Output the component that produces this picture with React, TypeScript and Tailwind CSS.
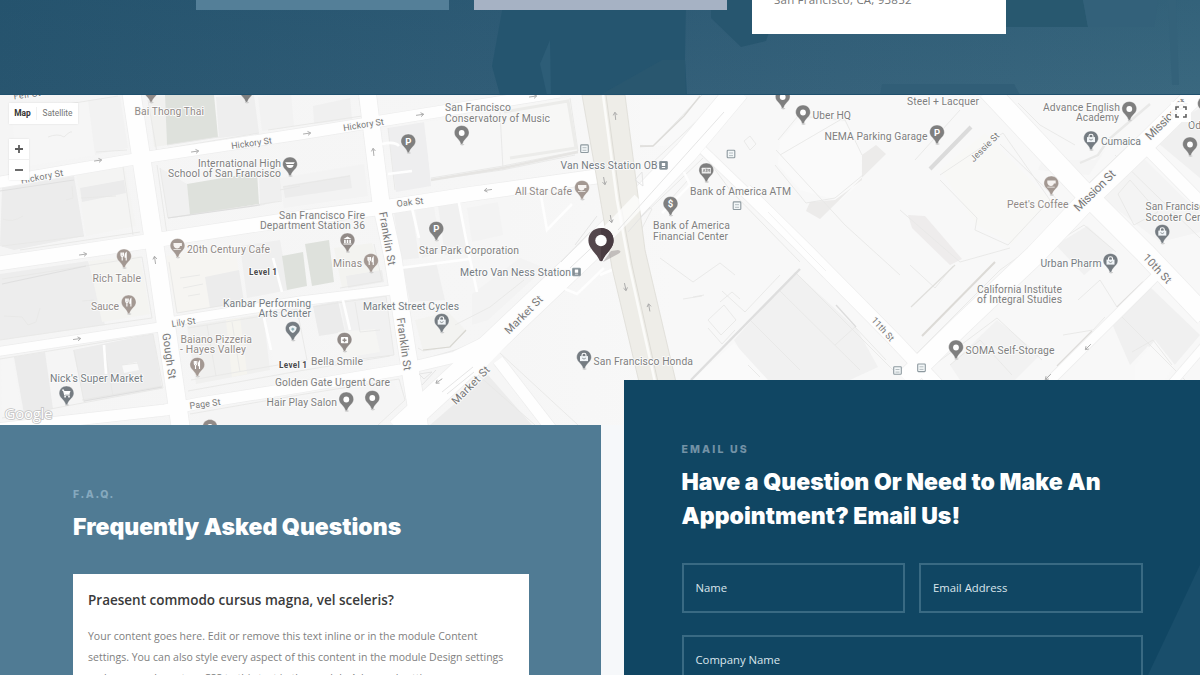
import React from "react";

type Glyph = "dot" | "P" | "$" | "cup" | "fork" | "bag" | "cart" | "plus" | "building" | "grad" | "atm" | "mask";

const GREY = "#7f7f7f";
const WARM = "#918a87";
const SLATE = "#757c82";

/* text, left x, width, vertical centre, colour */
const labels: [string, number, number, number, string][] = [
  ["Bai Thong Thai", 134.5, 69.5, 111.5, WARM],
  ["San Francisco", 445, 66, 107.5, GREY],
  ["Conservatory of Music", 445, 105, 118, GREY],
  ["International High", 198, 83, 163, GREY],
  ["School of San Francisco", 168, 113, 173.5, GREY],
  ["San Francisco Fire", 279, 86, 215, GREY],
  ["Department Station 36", 260, 105, 225.5, GREY],
  ["20th Century Cafe", 187, 83, 249.5, WARM],
  ["Rich Table", 92.5, 48.5, 278, WARM],
  ["Sauce", 91, 28, 306.5, WARM],
  ["Minas", 333, 29, 263.5, WARM],
  ["Star Park Corporation", 419, 100, 250.5, GREY],
  ["All Star Cafe", 515, 57, 191.5, WARM],
  ["Metro Van Ness Station", 460, 111, 272, SLATE],
  ["Van Ness Station OB", 560.5, 97, 165.5, SLATE],
  ["Bank of America ATM", 690, 101, 191.5, GREY],
  ["Bank of America", 653, 77, 225.5, GREY],
  ["Financial Center", 653, 75, 236, GREY],
  ["Uber HQ", 812.5, 38.5, 115, GREY],
  ["NEMA Parking Garage", 824.5, 103, 136.2, GREY],
  ["Steel + Lacquer", 907, 72, 101, GREY],
  ["Advance English", 1043, 77, 107, GREY],
  ["Academy", 1076, 43, 117.5, GREY],
  ["Cumaica", 1101, 40, 141.5, SLATE],
  ["Peet's Coffee", 1007, 61.5, 204.5, WARM],
  ["San Francisco", 1145.5, 65, 206.5, GREY],
  ["Scooter Center", 1145.5, 70, 217, GREY],
  ["Od", 1188, 13, 125.7, GREY],
  ["Urban Pharm", 1040.5, 61, 263.5, SLATE],
  ["California Institute", 977, 85, 289, GREY],
  ["of Integral Studies", 977, 85, 299.5, GREY],
  ["SOMA Self-Storage", 965.5, 89, 350.5, GREY],
  ["San Francisco Honda", 593.5, 99.5, 361, GREY],
  ["Market Street Cycles", 363, 96, 306.5, SLATE],
  ["Kanbar Performing", 223, 88, 303, SLATE],
  ["Arts Center", 258.5, 52.5, 313.7, SLATE],
  ["Baiano Pizzeria", 180.5, 71.5, 339, WARM],
  ["- Hayes Valley", 180, 66, 349.5, WARM],
  ["Bella Smile", 311, 52, 361, GREY],
  ["Golden Gate Urgent Care", 275, 115, 382.5, GREY],
  ["Hair Play Salon", 266.5, 70.5, 402, GREY],
  ["Nick's Super Market", 50, 93, 378, SLATE],
];

/* text, centre x, centre y, rotation, width, font size */
const streets: [string, number, number, number, number, number][] = [
  ["Fell St", 27, 94.5, -8, 27, 9],
  ["Hickory St", 42, 176.5, -11, 43, 9],
  ["Hickory St", 251.5, 143, -8, 41, 9],
  ["Hickory St", 363.5, 124.5, -9, 41, 9],
  ["Oak St", 410, 202, -7, 27, 9],
  ["Lily St", 183.5, 322, -8, 24, 9],
  ["Page St", 205, 403.7, -8, 31, 9],
  ["Gough St", 169.5, 356, 82, 46, 11],
  ["Franklin St", 387.5, 238.5, 80, 54, 11],
  ["Franklin St", 404.3, 344, 82, 53, 11],
  ["Market St", 523.5, 314.5, -45, 49, 11],
  ["Market St", 470.5, 385, -45, 49, 11],
  ["Mission St", 1094.5, 190.5, -45, 53, 12],
  ["Mission St", 1166, 119, -45, 53, 12],
  ["Jessie St", 984.5, 147, -45, 37, 9],
  ["11th St", 883, 329, 48, 29, 9],
  ["10th St", 1157.5, 268.5, 47, 36, 11],
];

const pins: [number, number, Glyph, string][] = [
  [151, 91, "dot", WARM],
  [246.5, 91, "dot", GREY],
  [290, 164.5, "grad", GREY],
  [408.3, 141.5, "P", GREY],
  [461.7, 133, "dot", GREY],
  [582, 188, "cup", "#a39892"],
  [436.3, 229, "P", GREY],
  [347.5, 240.5, "building", WARM],
  [371, 261, "fork", "#a39892"],
  [177.5, 246, "cup", "#a39892"],
  [124, 256.5, "fork", "#a39892"],
  [128.7, 302.5, "fork", "#a39892"],
  [66.5, 393.5, "cart", SLATE],
  [197.3, 365, "fork", "#a39892"],
  [292.8, 329, "mask", SLATE],
  [344.5, 340, "plus", WARM],
  [346.3, 399.5, "dot", GREY],
  [372.3, 398, "dot", GREY],
  [210, 427, "dot", WARM],
  [441.7, 321, "bag", SLATE],
  [584, 357.5, "bag", SLATE],
  [670.5, 204, "$", GREY],
  [706.3, 170.5, "atm", GREY],
  [782.7, 97, "dot", GREY],
  [803, 112.5, "dot", GREY],
  [937, 132.5, "P", GREY],
  [1129.3, 109, "dot", GREY],
  [1091, 138.5, "bag", SLATE],
  [1051.3, 183.5, "cup", "#a39892"],
  [1190, 144.5, "dot", GREY],
  [1205, 104, "dot", GREY],
  [1162.3, 232, "bag", SLATE],
  [1110.5, 261, "bag", SLATE],
  [956, 347.5, "dot", GREY],
];

/* centre x, centre y, rotation of a right-pointing arrow */
const arrows: [number, number, number][] = [
  [98, 160.5, -8], [195, 151.5, -8], [307, 133.5, -8], [420, 114.8, -8], [533, 96.5, -8],
  [83, 254.5, -8], [77, 339, -8], [488, 190, 172], [373.5, 152, -96], [155, 260, -98],
  [615.3, 116, -96], [604.3, 181, 80], [611, 219, 80], [625.3, 287, 78], [649.2, 307.5, -100],
  [439, 381, 145], [1088, 347, 135], [1048, 377, 135],
];

const roads: [string, number][] = [
  ["M131 90L157 262L181 430", 18],
  ["M367 90L381 203L393 258L407 350L420 430", 17],
  ["M-5 183L135 159L300 134L430 113L560 92", 11],
  ["M-5 264L150 241L300 218L380 208L470 194L600 176", 14],
  ["M-5 352L160 327L175 321L300 301L392 290", 9],
  ["M-5 429L165 410L200 403L300 387L400 370L455 357L500 335", 11],
  ["M398 430L492 343L590 250L640 200L686 152L738 90", 23],
  ["M703 150L760 205", 8],
  ["M745 190L808 252L893 338L940 388", 13],
  ["M988 90L1080 188L1145 253L1205 316", 20],
  ["M905 380L960 326L1035 255L1090 197L1140 149L1200 90", 20],
  ["M1146 147L1205 207", 12],
  ["M1155 277L1043 388", 9],
  ["M498 360L552 430", 11],
  ["M1205 345L1168 388", 8],
];

const lanes = [
  "M273 258L282 292", "M341 292L350 330", "M411 204L419 238", "M458 198L470 260",
  "M541 196L547 230L572 204", "M382 144Q395 141 399 146", "M388 174L412 171", "M400 268L470 259L477 292",
  "M565 289L577 294L604 268", "M475 376L520 330", "M684 172L690 185L662 213", "M600 245L640 206",
  "M640 258L600 275", "M264 318L271 350", "M104 345L106 374",
];

/* points, fill */
const blocks: [string, string][] = [
  ["12,112 118,95 127,150 16,168", "#f6f6f6"],
  ["88,100 120,96 128,148 95,155", "#f2f2f2"],
  ["2,188 74,176 84,236 14,250 0,246", "#ececec"],
  ["76,172 124,163 136,226 86,236", "#f4f4f3"],
  ["80,188 124,180 126,193 82,202", "#ebebeb"],
  ["149,97 165,96 167,145 154,147", "#f1f1ef"],
  ["216,97 254,95 259,133 219,138", "#eeeeee"],
  ["258,97 291,93 294,126 262,131", "#f2f2f2"],
  ["160,168 187,184 190,216 168,218", "#f0f0f0"],
  ["259,172 280,169 282,200 260,206", "#efefef"],
  ["280,178 364,164 368,196 284,208", "#f3f3f3"],
  ["283,186 350,175 352,188 285,198", "#ececec"],
  ["313,106 350,98 352,119 314,124", "#f0f0f0"],
  ["388,128 425,122 431,186 396,192", "#eeeeef"],
  ["424,122 499,112 503,170 431,180", "#f7f7f7"],
  ["500,108 571,98 579,152 504,165", "#f7f7f6"],
  ["394,213 412,210 419,258 401,260", "#f0f0f0"],
  ["415,208 434,206 441,253 422,258", "#f2f2f2"],
  ["438,205 460,202 467,251 445,255", "#f0f0f0"],
  ["467,208 498,202 503,235 472,242", "#f3f3f3"],
  ["166,256 235,245 243,302 176,313", "#f6f5f2"],
  ["205,277 239,270 244,302 210,308", "#ececec"],
  ["240,246 280,240 289,290 247,298", "#efefef"],
  ["334,248 372,243 382,281 342,288", "#f3f3f0"],
  ["346,276 382,270 384,282 348,288", "#ededed"],
  ["0,274 88,261 105,325 0,340", "#ededed"],
  ["89,261 140,256 150,314 102,322", "#f4f4f1"],
  ["1,359 13,357 22,414 2,417", "#f6f6f6"],
  ["14,357 45,352 53,409 24,414", "#ebebeb"],
  ["73,350 153,334 162,388 84,402", "#ececec"],
  ["48,354 72,350 83,403 55,408", "#f5f5f5"],
  ["122,365 137,362 139,370 124,373", "#f9f9f9"],
  ["187,326 263,314 270,370 196,384", "#f0f0ef"],
  ["226,320 240,318 247,374 232,377", "#f5f4ef"],
  ["266,320 300,313 307,360 274,368", "#f6f6f6"],
  ["313,306 338,301 345,332 319,336", "#ebebeb"],
  ["340,302 386,295 394,355 351,361", "#f1f1f1"],
  ["338,332 375,329 380,352 343,358", "#f5f5f3"],
  ["403,268 436,262 445,300 410,302", "#efefef"],
  ["415,320 448,312 465,330 449,347 423,351", "#f3f3f1"],
  ["472,294 520,258 545,268 488,320 472,325", "#f3f3f3"],
  ["300,398 392,381 404,399 378,424 200,424 198,412", "#f5f5f5"],
  ["430,425 488,375 532,425", "#ececec"],
  ["640,100 720,95 670,145 650,147 640,143", "#f9f9f9"],
  ["780,140 800,118 845,122 862,152 861,182 840,201 800,190 778,165", "#fafafa"],
  ["862,155 876,145 886,154 820,219 806,211 810,202 835,200 862,180", "#ecebea"],
  ["908,215 925,216 962,259 950,265 912,228", "#eeecec"],
  ["940,170 985,133 1050,200 1012,244 977,225", "#f8f8f6"],
  ["795,272 857,329 878,367 850,380 758,380 734,340", "#f1f1f1"],
  ["734,343 768,380 692,380", "#fafafa"],
  ["1056,245 1087,226 1114,250 1084,275", "#f1f1f1"],
  ["1160,132 1200,108 1200,178 1157,142", "#f0f0f0"],
  ["1102,198 1140,155 1200,214 1200,232 1160,242", "#f4f4f4"],
  ["1110,319 1150,287 1200,335 1172,368 1148,346 1130,365", "#f0f0f0"],
  ["1135,365 1155,340 1175,365 1165,380 1135,380", "#f9f9f9"],
  ["950,365 997,320 1040,355 1015,380 960,380", "#f2f2f2"],
  ["1038,170 1050,142 1065,160 1095,160 1105,150 1089,175", "#f5f5f5"],
];

const outlines = [
  "M12 113L118 96M96 152L127 150M20 250L140 232M2 246L84 236",
  "M48 137Q58 133 64 137Q70 131 72 132M3 219Q12 223 23 216M66 200L73 198L72 186M81 198L116 196",
  "M146 152L259 133M167 145L219 137M168 218L282 201M160 168L168 218M157 165L167 234L300 211",
  "M148 100L157 153L290 132M133 235L122 160L4 183M268 130L362 116L359 98M280 190L300 186",
  "M283 187L350 176M372 195L366 122L284 137M395 190L388 128M431 180L502 170M502 170L575 155M500 112L503 170",
  "M431 178L503 166L578 151L570 98M388 212L595 179M397 258L388 215",
  "M0 340L102 325L152 318L142 257L2 279M4 316L22 317L28 325L36 322L40 308M82 301L94 300",
  "M0 359L153 334L163 388L2 418M74 350L84 402M104 345L113 396M82 400L162 386M122 365L138 363",
  "M188 328L263 316L297 309L307 360L191 380M207 325L216 376M232 322L240 372M169 262L177 313L243 302",
  "M180 278L200 275M183 288L203 284M188 296L200 294M340 288L382 281L374 244",
  "M313 307L344 302L386 296L394 355L319 364M355 302L360 332L380 330M418 348L423 351L449 347L466 331",
  "M188 391L299 371L390 356M190 414L299 395L399 379L405 400L378 425",
  "M414 362L455 350L497 335M425 405L488 350L510 332L502 350M426 418L442 399M441 392L470 368",
  "M502 350L620 235M500 353L578 425M478 375L535 425M524 280L490 307L455 325",
  "M640 147L653 146L702 95M650 165L698 120M703 158L617 240M715 168L686 140",
  "M708 154L800 244L890 330M708 160L730 190L800 262M776 150L845 225L900 275",
  "M778 140L798 116L845 120L862 155M775 165L806 203L835 198L863 175M780 155L840 120",
  "M744 141L750 136L756 144L750 150ZM688 180L670 200M640 232L652 209L640 205",
  "M660 258L693 282L720 263L735 275M693 297L704 295M683 299L702 296M708 328L722 344L735 330",
  "M708 320L724 305L736 320L721 335ZM722 291L745 312L780 275M720 302L732 292L740 299",
  "M835 345L855 327L886 360M780 291L860 370M795 272L893 370M750 320L800 370M748 365L760 377",
  "M940 175L1003 133L1050 200L1008 245L975 230L977 218L940 180M1000 144L1068 210",
  "M1010 112L1089 183L1132 142M1018 103L1040 125L1075 145M915 160L960 110",
  "M900 210L960 262L1010 248M910 265L935 288L953 266M915 355L1000 270L1042 240",
  "M1115 155L1200 238M1100 200L1143 155M1118 194L1130 180L1158 212L1134 225ZM1108 320L1155 278L1200 322",
  "M1063 335L1093 330L1105 317M1115 310L1200 395M1132 352L1153 340L1172 365M1060 240L1084 225L1116 252",
  "M930 368L997 318L1042 360M950 365L980 340L1012 375M1078 300L1100 280L1117 307L1145 283",
];

const heavy = [
  ["M691 380L800 269", "#dedede", 2.4],
  ["M836 305L856 327", "#dddddd", 1.4],
  ["M922 336L995 262", "#dcdad6", 2],
  ["M911 307L955 265", "#e0dfdc", 1.2],
  ["M930 169L971 127", "#dbdbdb", 4],
  ["M640 146L653 146L684 116L700 96", "#dddcd9", 1.4],
  ["M1117 307L1143 282", "#dddcda", 1.2],
  ["M1057 366L1092 331", "#dddcda", 1.4],
  ["M423 350L450 347L466 330", "#d9d8d2", 1.2],
  ["M431 180L503 168L578 152", "#e6e5e3", 2.4],
  ["M504 112L568 101L576 148L510 158", "#ececea", 3],
  ["M1080 163L1098 155L1108 140L1150 104", "#e9e9e8", 2.4],
  ["M0 191L74 180M2 284L86 266", "#e0e0e0", 1],
  ["M168 218L260 205M84 401L162 387", "#dedede", 1.2],
] as [string, string, number][];

function PinGlyph({ kind }: { kind: Glyph }) {
  const line = { fill: "none", stroke: "#fff", strokeWidth: 1.1 };
  switch (kind) {
    case "dot":
      return <circle r={2.9} fill="#fff" />;
    case "P":
    case "$":
      return (
        <text y={3.4} textAnchor="middle" fontSize={9.5} fontWeight={700} fill="#fff" fontFamily="Roboto, sans-serif">
          {kind}
        </text>
      );
    case "cup":
      return <path d="M-4 -3H4.4V0H2.6Q2.4 2.2 0 2.4Q-3 2.6 -4 -.5ZM-4 3.2H3.4V4H-4Z" fill="#f6f3f1" />;
    case "fork":
      return <path d="M-3 -4V-1.2Q-3 0 -1.8 .2V4M-1.8 -4V-1M-.5 -4V-1.2Q-.5 0 -1.8 .2M2.2 4V-3.8Q.9 -2.6 1.1 .6H2.2" {...line} />;
    case "bag":
      return (
        <>
          <path d="M-4 -1.4H4V3.6H-4Z" fill="#f1f5f8" />
          <path d="M-2 -1V-2.4Q-2 -4.2 0 -4.2Q2 -4.2 2 -2.4V-1" {...line} />
          <path d="M-1.8 .6Q0 2.6 1.8 .6" fill="none" stroke={SLATE} strokeWidth={0.8} />
        </>
      );
    case "cart":
      return (
        <>
          <path d="M-4.4 -3.4H-3L-1.8 1.4H3.2" {...line} />
          <path d="M-2.8 -2.6H4L3 .6H-2Z" fill="#fff" />
          <circle cx={-1.4} cy={3.2} r={0.9} fill="#fff" />
          <circle cx={2.5} cy={3.2} r={0.9} fill="#fff" />
        </>
      );
    case "plus":
      return (
        <>
          <rect x={-3.6} y={-3} width={7.2} height={6.2} rx={0.8} fill="#fff" />
          <path d="M0 -1.8V2.2M-2 .2H2" stroke={WARM} strokeWidth={1.4} />
        </>
      );
    case "building":
      return <path d="M-4 -1.6L0 -4L4 -1.6ZM-3.4 -.8H-1.8V2.4H-3.4ZM-.8 -.8H.8V2.4H-.8ZM1.8 -.8H3.4V2.4H1.8ZM-4 3H4V4H-4Z" fill="#fff" />;
    case "grad":
      return <path d="M-4.8 -2.2H4.8L3.6 -.4H-3.6ZM-3.6 .4H3.6Q3 3.4 0 3.4Q-3 3.4 -3.6 .4Z" fill="#fff" />;
    case "atm":
      return (
        <>
          <rect x={-4.6} y={-2.8} width={9.2} height={5.8} rx={0.5} fill="#f0f0f0" />
          <path d="M-3.2 1.6L-2.2 -1.4L-1.2 1.6M-.8 -1.4H1M.1 -1.4V1.6M1.6 1.6V-1.4L2.5 0L3.4 -1.4V1.6" fill="none" stroke={GREY} strokeWidth={0.7} />
        </>
      );
    default:
      return (
        <>
          <path d="M-3.8 -1.8Q0 -5.2 3.8 -1.8Q4 2 0 4Q-4 2 -3.8 -1.8Z" fill="#eef3f5" />
          <path d="M-1.8 0L0 -1.6L1.8 0L0 2Z" fill="#8eb0b8" />
        </>
      );
  }
}

function Pin({ x, y, kind, color }: { x: number; y: number; kind: Glyph; color: string }) {
  return (
    <g transform={`translate(${x} ${y})`}>
      <ellipse cx={0.5} cy={11.6} rx={2.2} ry={0.8} fill="#cfcfcf" />
      <path
        d="M0 -7.5C4.2 -7.5 7.4 -4.3 7.4 -.2C7.4 4.2 2.4 6 1.2 10.4Q0 12.2 -1.2 10.4C-2.4 6 -7.4 4.2 -7.4 -.2C-7.4 -4.3 -4.2 -7.5 0 -7.5Z"
        fill={color}
        stroke="#fff"
        strokeWidth={0.4}
      />
      <PinGlyph kind={kind} />
    </g>
  );
}

function Transit({ x, y, solid }: { x: number; y: number; solid?: boolean }) {
  return (
    <g transform={`translate(${x} ${y})`}>
      <rect x={-3.8} y={-3.8} width={7.6} height={7.6} rx={0.8} fill={solid ? "#808b92" : "#f3f7f8"} stroke="#8d999f" strokeWidth={1.1} />
      {solid ? (
        <path d="M-1.7 -2.4H1.7V.8H-1.7ZM-1.7 1.8H1.7V2.6H-1.7Z" fill="#fff" />
      ) : (
        <path d="M-2 -1H2M-2 1.6H2" stroke="#a3adb2" strokeWidth={0.8} />
      )}
    </g>
  );
}

function CityMap() {
  const halo = { paintOrder: "stroke", stroke: "#fbfbfb", strokeWidth: 1.8, strokeLinejoin: "round" } as const;
  return (
    <svg viewBox="0 95 1200 330" className="block h-[330px] w-[1200px]" fontFamily="Roboto, sans-serif">
      <defs>
        <linearGradient id="land" x1="0" x2="1" y1="0" y2="0">
          <stop offset="0" stopColor="#f5f5f5" />
          <stop offset="0.42" stopColor="#f6f6f6" />
          <stop offset="0.56" stopColor="#f8f8f8" />
          <stop offset="1" stopColor="#f8f8f8" />
        </linearGradient>
      </defs>
      <rect x={0} y={95} width={1200} height={330} fill="url(#land)" />
      {blocks.map(([p, f]) => (
        <polygon key={p} points={p} fill={f} />
      ))}
      <g fill="#dee1dc">
        <polygon points="165,95 214,95 218,137 167,145" />
        <polygon points="187,184 257,172 259,204 190,215" />
        <polygon points="282,256 303,252 307,286 287,290" />
        <polygon points="305,244 329,240 334,282 312,286" />
      </g>
      {outlines.map((d) => (
        <path key={d} d={d} fill="none" stroke="#e8e8e7" strokeWidth={0.9} />
      ))}
      {heavy.map(([d, c, w]) => (
        <path key={d} d={d} fill="none" stroke={c} strokeWidth={w} />
      ))}
      {roads.map(([d, w]) => (
        <path key={"e" + d} d={d} fill="none" stroke="#ededed" strokeWidth={w + 1.4} strokeLinejoin="round" />
      ))}
      {lanes.map((d) => (
        <path key={d} d={d} fill="none" stroke="#fefefe" strokeWidth={2.6} />
      ))}
      {roads.map(([d, w]) => (
        <path key={d} d={d} fill="none" stroke="#fefefe" strokeWidth={w} strokeLinejoin="round" />
      ))}
      <polygon points="582,95 625,95 645,250 676,382 639,382 612,268 597,180" fill="#eeede8" stroke="#dddcd6" strokeWidth={0.8} />
      <path d="M603 95L617 200L629 265L655 382" fill="none" stroke="#fbfbf9" strokeWidth={2.6} />
      <path d="M606 95L620 200L632 265L658 382" fill="none" stroke="#d9d8d2" strokeWidth={0.8} />
      <path d="M598 243L612 229L640 200" fill="none" stroke="#fefefe" strokeWidth={15} opacity={0.75} />
      <g fill="none" stroke="#e2e2e2" strokeWidth={0.9}>
        <path d="M419 374L432 372L424 379ZM422 385L436 370M442 392L473 367M447 394L474 372M575 245L597 216M561 262L590 232M570 268L604 236" />
        <path d="M618 230L724 112M628 232L650 207M635 180L642 172L643 186Z" />
        <path d="M768 212L808 253L826 271" stroke="#efefef" />
      </g>
      <g stroke="#a9a9a9" strokeWidth={0.9} fill="none">
        {arrows.map(([x, y, r]) => (
          <path key={`${x}-${y}`} d="M-4 0H3.4M.8 -2L3.8 0L.8 2" transform={`translate(${x} ${y}) rotate(${r})`} />
        ))}
      </g>
      <Transit x={584.5} y={148.7} />
      <Transit x={663.5} y={165.3} solid />
      <Transit x={731} y={154} />
      <Transit x={737} y={205.7} />
      <Transit x={576.5} y={272} solid />
      <Transit x={897.5} y={370.5} />
      <Transit x={921.5} y={367.8} />
      {streets.map(([t, x, y, r, w, s]) => (
        <text
          key={t + x}
          transform={`translate(${x} ${y}) rotate(${r})`}
          x={-w / 2}
          y={s * 0.36}
          fontSize={s}
          textLength={w}
          fill="#777"
          {...halo}
        >
          {t}
        </text>
      ))}
      {labels.map(([t, x, w, y, c]) => (
        <text key={t + x + y} x={x} y={y + 3.6} fontSize={10.4} textLength={w} fill={c} {...halo}>
          {t}
        </text>
      ))}
      {[[249, 271.7], [279, 365.2]].map(([x, y]) => (
        <text key={x} x={x} y={y + 2.9} fontSize={8.4} fontWeight={700} textLength={28} fill="#4b4b4b" {...halo}>
          Level 1
        </text>
      ))}
      {pins.map(([x, y, k, c]) => (
        <Pin key={`${x}-${y}`} x={x} y={y} kind={k} color={c} />
      ))}
      <g transform="translate(601 241)">
        <path d="M2 21L17 13Q22 10 17 9L10 10Z" fill="#8c8587" opacity={0.45} />
        <path d="M0 -13C7.4 -13 12.6 -7.5 12.6 -.6C12.6 7.5 4 12.5 1.5 19.5Q0 21 -1.5 19.5C-4 12.5 -12.6 7.5 -12.6 -.6C-12.6 -7.5 -7.4 -13 0 -13Z" fill="#54474c" />
        <path d="M0 -13C7.4 -13 12.6 -7.5 12.6 -.6C12.6 7.5 4 12.5 1.5 19.5L0 20.2Z" fill="#493c42" />
        <circle cy={-0.5} r={5.7} fill="#fff" />
      </g>
      <text x={4.5} y={419} fontSize={15} fontFamily="'Open Sans', sans-serif" textLength={48} fill="#fff" stroke="#c2c2c2" strokeWidth={1.6} paintOrder="stroke">
        Google
      </text>
    </svg>
  );
}

function MapSection() {
  return (
    <section className="relative h-[330px] overflow-hidden">
      <CityMap />
      <div className="absolute left-[9px] top-[8px] flex h-[21px] w-[69px] items-center bg-white font-[Roboto,sans-serif] text-[8.4px] shadow-[0_0_2px_rgba(0,0,0,0.1)]">
        <span className="w-[27px] text-center font-bold text-[#333]">Map</span>
        <span className="flex-1 border-l border-[#f1f1f1] text-center text-[#747474]">Satellite</span>
      </div>
      <div className="absolute left-[9px] top-[44px] flex h-[41px] w-[20px] flex-col bg-white text-[#5c5c5c] shadow-[0_0_2px_rgba(0,0,0,0.1)]">
        <span className="flex flex-1 items-center justify-center border-b border-[#f0f0f0]">
          <svg viewBox="0 0 8 8" className="size-2"><path d="M4 0V8M0 4H8" stroke="currentColor" strokeWidth="1.8" /></svg>
        </span>
        <span className="flex flex-1 items-center justify-center">
          <svg viewBox="0 0 8 8" className="size-2"><path d="M0 4H8" stroke="currentColor" strokeWidth="1.8" /></svg>
        </span>
      </div>
      <div className="absolute left-[1171px] top-[7px] flex size-[20px] items-center justify-center bg-white/90 text-[#5f5f5f]">
        <svg viewBox="0 0 12 12" className="size-3">
          <path d="M1 4V1H4M8 1H11V4M11 8V11H8M4 11H1V8" fill="none" stroke="currentColor" strokeWidth="1.6" />
        </svg>
      </div>
    </section>
  );
}

function Hero() {
  return (
    <section className="relative h-[95px] overflow-hidden bg-[#2d5b75]">
      <svg viewBox="0 0 1200 95" className="absolute inset-0 h-[95px] w-[1200px]">
        <defs>
          <linearGradient id="sky" x1="0" y1="0" x2="1" y2="0">
            <stop offset="0" stopColor="#28556f" />
            <stop offset="0.42" stopColor="#315d77" />
            <stop offset="0.7" stopColor="#36627b" />
            <stop offset="1" stopColor="#3a687f" />
          </linearGradient>
          <linearGradient id="shade" x1="0" y1="0" x2="0" y2="1">
            <stop offset="0" stopColor="#1a4c68" stopOpacity="0.22" />
            <stop offset="1" stopColor="#1a4c68" stopOpacity="0" />
          </linearGradient>
        </defs>
        <rect width="1200" height="95" fill="url(#sky)" />
        <rect width="1200" height="95" fill="url(#shade)" />
        <polygon points="504,0 686,0 685,60 687,95 500,95 492,66" fill="#25556f" />
        <polygon points="550,40 540,64 547,95 551,95" fill="#2d5d77" />
        <polygon points="662,60 685,60 686,95 600,95" fill="#29576f" />
        <polygon points="711,0 780,0 766,41 741,47 711,18" fill="#27566f" />
        <polygon points="1006,0 1083,0 1088,27 1006,27" fill="#28586f" />
        <polygon points="1083,0 1158,0 1154,27 1088,27" fill="#33617a" />
        <polygon points="1168,0 1176,0 1179,85 1172,85" fill="#34627a" />
        <polygon points="882,84 1014,84 1020,95 880,95" fill="#315e77" />
        <rect y="94" width="1200" height="1" fill="#1f506d" />
      </svg>
      <div className="relative flex items-start gap-[25px] pl-[196px]">
        <div className="h-[10px] w-[253px] bg-[#547f98]" />
        <div className="h-[10px] w-[253px] bg-[#a6b2c4]" />
        <div className="h-[34px] w-[254px] bg-white pl-[22px]">
          <p className="-mt-[9px] whitespace-nowrap font-['Open_Sans',sans-serif] text-[11.5px] leading-[18px] tracking-[0.22px] text-[#777]">
            San Francisco, CA, 93852
          </p>
        </div>
      </div>
    </section>
  );
}

function Field({ label, className }: { label: string; className: string }) {
  return (
    <div className={`flex h-[50px] items-center border-2 border-[#396a83] pl-[12px] text-[11.3px] text-[#dbe6ed] ${className}`}>
      {label}
    </div>
  );
}

function Faq() {
  return (
    <section className="h-[250px] w-[601px] bg-[#507b94] pl-[73px] pt-[62px] font-['Open_Sans',sans-serif]">
      <p className="font-[Inter,sans-serif] text-[10.5px] font-extrabold leading-[15px] tracking-[1.6px] text-[#86a9be]">F.A.Q.</p>
      <h2 className="mt-[8px] whitespace-nowrap font-[Inter,sans-serif] text-[23px] font-black leading-[34px] text-white">
        Frequently Asked Questions
      </h2>
      <div className="mt-[30px] h-[110px] w-[456px] overflow-hidden bg-white pl-[15px] pt-[16px]">
        <h3 className="whitespace-nowrap text-[13.5px] font-semibold leading-[20px] text-[#3a3a3a]">
          Praesent commodo cursus magna, vel sceleris?
        </h3>
        <p className="mt-[15.5px] whitespace-nowrap text-[10.5px] leading-[21px] text-[#808080]">
          Your content goes here. Edit or remove this text inline or in the module Content
          <br />
          settings. You can also style every aspect of this content in the module Design settings
          <br />
          and even apply custom CSS to this text in the module Advanced settings.
        </p>
      </div>
    </section>
  );
}

function EmailForm() {
  return (
    <section className="relative -mt-[45px] h-[295px] w-[576.5px] overflow-hidden bg-[#104663] pl-[58px] pt-[62px]">
      <svg viewBox="0 0 56 110" className="absolute bottom-0 right-0 h-[110px] w-[56px]">
        <polygon points="56,0 56,110 4,110" fill="#194e6b" />
      </svg>
      <div className="relative font-['Open_Sans',sans-serif]">
        <p className="font-[Inter,sans-serif] text-[10.5px] font-extrabold leading-[15px] tracking-[2.15px] text-[#7392a6]">EMAIL US</p>
        <h2 className="mt-[8px] whitespace-nowrap font-[Inter,sans-serif] text-[23px] font-black leading-[34px] tracking-[0.03px] text-white">
          Have a Question Or Need to Make An
          <br />
          Appointment? Email Us!
        </h2>
        <div className="mt-[30px] grid w-[461px] grid-cols-2 gap-x-[14px] gap-y-[22px]">
          <Field label="Name" className="" />
          <Field label="Email Address" className="" />
          <Field label="Company Name" className="col-span-2" />
        </div>
      </div>
    </section>
  );
}

export default function App() {
  return (
    <main className="h-[675px] w-[1200px] overflow-hidden bg-[#f6f8fa]">
      <Hero />
      <MapSection />
      <div className="flex items-start justify-between">
        <Faq />
        <EmailForm />
      </div>
    </main>
  );
}
